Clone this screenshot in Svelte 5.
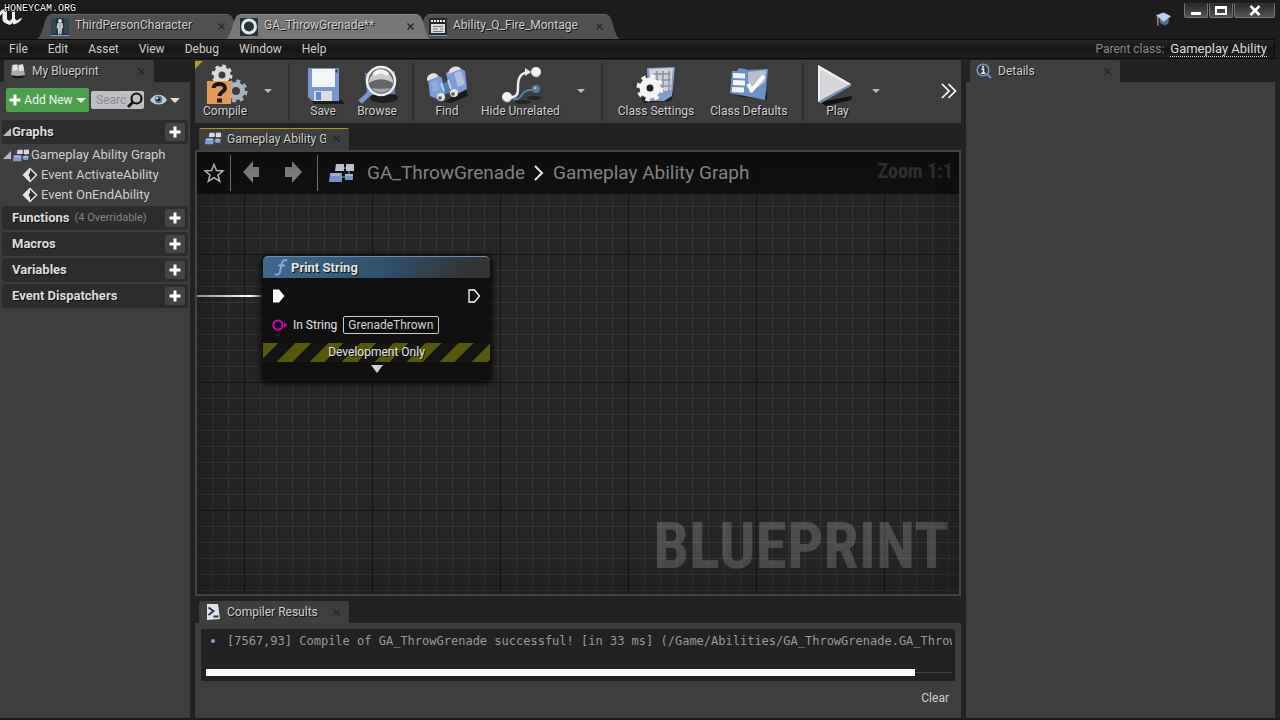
<script>
  const documents = [
    { title: 'ThirdPersonCharacter', icon: 'figure' },
    { title: 'GA_ThrowGrenade**', icon: 'ring', active: true },
    { title: 'Ability_Q_Fire_Montage', icon: 'clip' }
  ];
  const menus = ['File', 'Edit', 'Asset', 'View', 'Debug', 'Window', 'Help'];
  const toolbar = [
    [{ label: 'Compile', menu: true }],
    [{ label: 'Save' }, { label: 'Browse' }],
    [{ label: 'Find' }, { label: 'Hide Unrelated', menu: true }],
    [{ label: 'Class Settings' }, { label: 'Class Defaults' }],
    [{ label: 'Play', menu: true }]
  ];
  const sections = [
    { name: 'Functions', note: '(4 Overridable)' },
    { name: 'Macros' },
    { name: 'Variables' },
    { name: 'Event Dispatchers' }
  ];
  const events = ['Event ActivateAbility', 'Event OnEndAbility'];
  let search = $state('');
  let inString = $state('GrenadeThrown');
</script>

{#snippet close(name)}
  <button class="close" aria-label="Close {name}">
    <svg width="7" height="7" viewBox="0 0 7 7"><path d="M.5.5l6 6M6.5.5l-6 6" stroke="currentColor" stroke-width="1.3" /></svg>
  </button>
{/snippet}

{#snippet caret(size = 10)}
  <svg width={size} height={size / 2} viewBox="0 0 10 5"><path d="M0 0h10L5 5z" fill="currentColor" /></svg>
{/snippet}

{#snippet plus()}
  <svg width="12" height="12" viewBox="0 0 12 12"><path d="M4.500 .5h3v4h4v3h-4v4h-3v-4h-4v-3h4z" fill="#fff" /></svg>
{/snippet}

{#snippet graphIcon(size)}
  <svg width={size} height={size * 0.8} viewBox="0 0 25 20">
    <path d="M11 5h6M11 14h8M20 6v8" stroke="#7b7f86" stroke-width="1.500" />
    <path d="M7 1h8v7H6z" fill="#d5d8e0" /><path d="M17 1h8v7h-8z" fill="#d5d8e0" />
    <path d="M1 10h12v9H0z" fill="#7e9cd4" /><path d="M2 10h10l-1 3H2z" fill="#a8bce4" />
    <path d="M16 11h8v6h-8z" fill="#809fd8" /><path d="M16 11h8v2h-8z" fill="#b2c2e3" />
  </svg>
{/snippet}

{#snippet docIcon(kind)}
  <svg width="18" height="18" viewBox="0 0 18 18">
    <rect width="18" height="18" fill={kind === 'clip' ? '#292929' : '#26323b'} />
    {#if kind === 'figure'}
      <path d="M0 0h5v16H0zM13 0h5v16h-5z" fill="#304654" />
      <circle cx="9" cy="3" r="1.900" fill="#e0e0dc" />
      <path d="M6.500 5h5l.7 5-1.200.2-.6 6.300H9.200L9 11l-.5 5.500H7.200l-.5-6.300-1.200-.2z" fill="#c8ccc8" />
      <path d="M9 5v5" stroke="#8e9290" />
    {:else if kind === 'ring'}
      <circle cx="9" cy="8.500" r="6.500" fill="#22333f" stroke="#e6e6e6" stroke-width="3" />
    {:else}
      <path d="M2 6h14v9H2z" fill="#ddd" />
      <path d="M2 3h14" stroke="#eee" stroke-width="2" stroke-dasharray="2 1" />
      <path d="M4 8.500h10M4 11h5M11 11h3M4 13.500h10" stroke="#777" />
    {/if}
    {#if kind !== 'ring'}<path d="M0 17.500h18" stroke="#7398dc" />{/if}
  </svg>
{/snippet}

{#snippet toolIcon(label)}
  <svg width="42" height="42" viewBox="0 0 42 42">
    {#if label === 'Compile'}
      <g fill="none" stroke="#d9dadd">
        <circle cx="18" cy="11" r="6" stroke-width="5" />
        <circle cx="18" cy="11" r="9" stroke-width="3" stroke-dasharray="3.500 3.570" />
      </g>
      <g fill="none" stroke="#a9b1c1">
        <circle cx="32" cy="27" r="6.500" stroke-width="5" />
        <circle cx="32" cy="27" r="10" stroke-width="3" stroke-dasharray="4 3.850" />
      </g>
      <path d="M3 17h24v23H3z" fill="#e29a55" />
      <path d="M9.500 24c0-5.500 11.500-5.500 11.500 0 0 4-5.500 4-5.500 8" fill="none" stroke="#171717" stroke-width="4" />
      <rect x="13" y="34.500" width="5" height="4" fill="#171717" />
    {:else if label === 'Save'}
      <path d="M9 36h31l3 4H12z" fill="#1c1c1c" />
      <path d="M6 4h31v33H10l-4-4z" fill="#7896cc" />
      <path d="M10 5h23v18H10z" fill="#f5f5f5" />
      <path d="M12 27h18v10H12z" fill="#d9dce2" /><path d="M14 28h5v8h-5z" fill="#6184c2" />
      <path d="M33.500 5.500h2v3h-2z" fill="#243b63" />
    {:else if label === 'Browse'}
      <ellipse cx="28" cy="34" rx="14" ry="5" fill="#1d1d1d" />
      <path d="M9 9l30-2v23L11 31z" fill="#6584ba" />
      <path d="M16 27L4 38" stroke="#7897cf" stroke-width="5" />
      <circle cx="25" cy="17" r="14" fill="#626468" stroke="#eceef0" stroke-width="2.500" />
      <path d="M13 19a12 12 0 0124 0c-8-5-16-5-24 0z" fill="#c9cbcf" />
      <path d="M18 11c3-5 10-5 14 0" stroke="#f4f4f4" stroke-width="4" fill="none" />
      <path d="M15 24c6 6 14 6 20 0-5 1-15 1-20 0z" fill="#a5a7aa" />
    {:else if label === 'Find'}
      <path d="M18 38l22-13 2 7-17 7z" fill="#1c1c1c" />
      <path d="M15 20l12-5 2 12-12 4z" fill="#5580b4" />
      <path d="M2 15c4-5 9-5 14-1l3 15-8 6-7-3z" fill="#7b9cd6" />
      <path d="M20 9L32 3l7 4 2 18-8 4-10-6z" fill="#7b9cd6" />
      <path d="M1 15c0-5 7-8 11-4l-1 2-10 4zM23 7c1-4 9-7 12-2l-13 5z" fill="#dfe1e6" />
      <path d="M28 9l7-2 4 13-7 3z" fill="#b4bfd9" /><path d="M5 18l6-2 2 11-6 1z" fill="#8eabdd" />
      <path d="M15 19l3 8M22 16l3 9" stroke="#d4dae6" stroke-width="1.500" />
      <circle cx="15" cy="33" r="4" fill="#e4e4e4" /><circle cx="28" cy="29" r="4" fill="#e4e4e4" />
      <circle cx="14" cy="34" r="1.800" fill="#555" /><circle cx="27" cy="30" r="1.800" fill="#555" />
    {:else if label === 'Hide Unrelated'}
      <ellipse cx="35" cy="34" rx="7" ry="2" fill="#252525" />
      <ellipse cx="24" cy="38" rx="8" ry="2" fill="#252525" />
      <path d="M11 34c15 5 8-9 22-8" fill="none" stroke="#5585a8" stroke-width="2" />
      <circle cx="37" cy="25" r="4" fill="#4e7ea5" /><circle cx="36" cy="24" r="1.500" fill="#9ab8cc" />
      <path d="M8 33h6c5-1 5-5 5-11 0-9 3-14 12-14" fill="none" stroke="#eceef2" stroke-width="2.500" />
      <path d="M26 4l6 4-6 4z" fill="#e4e7ee" />
      <circle cx="8" cy="33" r="5" fill="#f2f2f2" /><circle cx="37" cy="8" r="5" fill="#f2f2f2" />
      <path d="M4 35c2 4 7 4 8 0M33 10c2 4 7 4 8 0" fill="none" stroke="#9fa8b8" />
    {:else if label === 'Class Settings'}
      <path d="M6 34l33-5-3 8-27 2z" fill="#1c1c1c" />
      <path d="M12 4l28-1-3 29-8 5H13z" fill="#829cc7" />
      <path d="M14 5l24-1-2 22-19 3z" fill="#d0d3d9" />
      <path d="M19 10h17M19 16h17M19 22h17M22 7v22M28 7v22M34 7v22" stroke="#8792a5" stroke-width="1.500" />
      <circle cx="15" cy="24" r="7" fill="#222" stroke="#f3f3f3" stroke-width="7" />
      <circle cx="15" cy="24" r="11.500" fill="none" stroke="#f3f3f3" stroke-width="4" stroke-dasharray="4.500 4.530" />
    {:else if label === 'Class Defaults'}
      <path d="M8 32l31-4v8z" fill="#1d1d1d" />
      <path d="M4 7h5l2-3 6 1 2 1 21-1-3 31L2 29z" fill="#6c91ca" />
      <path d="M20 8l18-2-1 12-16 11z" fill="#babfca" />
      <path d="M5 9l12 .5v5L5 14zM5 16l12 .5v5L5 21zM4 23l12 .5v5L4 28z" fill="#f5f5f5" />
      <path d="M20 20l4 6 12-14" fill="none" stroke="#fff" stroke-width="4" />
    {:else}
      <path d="M4 38l32-6-1 4-25 6z" fill="#111" />
      <path d="M2 1l33 19L2 38z" fill="#d4d6da" /><path d="M2 1l33 19-2 1L4 5v32l-2 1z" fill="#eff0f2" />
      <path d="M2 38l33-18v2L5 39z" fill="#7192b6" />
    {/if}
  </svg>
{/snippet}

<div class="editor">
  <header class="titlebar">
    <svg class="logo" width="22" height="17" viewBox="0 0 22 17">
      <path d="M0 4C2 1 5 0 9 0L7 2v9l2 2 3-2V4L10 2.500 17 0l-2 2v9l2 1.500 5-3c-1 4-5 6-8 7L12.500 15 10 17C6 16 3 14 2.500 12V5L0 8z" fill="#eee" />
    </svg>
    <span class="stamp">HONEYCAM.ORG</span>
    <nav class="docs" aria-label="Open documents">
      {#each documents as doc}
        <div class="doc" class:active={doc.active}>
          <svg class="cap" width="14" height="25" viewBox="0 0 14 25"><path d="M0 25C6 22 7 3 12 1l2-1v25z" fill="currentColor" /></svg>
          <div class="doc-body">
            {@render docIcon(doc.icon)}
            <a href="#{doc.icon}">{doc.title}</a>
            {@render close(doc.title)}
          </div>
          <svg class="cap" width="14" height="25" viewBox="0 0 14 25"><path d="M14 25C8 22 7 3 2 1L0 0v25z" fill="currentColor" /></svg>
        </div>
      {/each}
    </nav>
    <button class="tutorial" aria-label="Tutorials">
      <svg width="16" height="15" viewBox="0 0 17 15"><path d="M4 6l10 1-1 5-4 2-5-3z" fill="#48708f" /><path d="M0 3l8-3 8 4-8 6z" fill="#bdcdf0" /><path d="M1 4l1 2v8" stroke="#c28a59" stroke-width="1.500" fill="none" /></svg>
    </button>
    <div class="window-buttons">
      <button aria-label="Minimize"><svg width="12" height="11" viewBox="0 0 12 11"><path d="M1 7h10v3H1z" fill="#fff" /></svg></button>
      <button aria-label="Maximize"><svg width="12" height="11" viewBox="0 0 12 11"><path d="M0 1h12v9H0zM2 4v4h8V4z" fill="#fff" fill-rule="evenodd" /></svg></button>
      <button class="wide" aria-label="Close window"><svg width="12" height="11" viewBox="0 0 12 11"><path d="M1.500 1l9 9M10.500 1l-9 9" stroke="#fff" stroke-width="2.500" /></svg></button>
    </div>
  </header>

  <div class="menubar">
    {#each menus as menu}<button>{menu}</button>{/each}
    <p>Parent class: <a href="#parent">Gameplay Ability</a></p>
  </div>

  <main>
    <aside class="left">
      <div class="tab">
        <svg width="16" height="14" viewBox="0 0 16 14"><path d="M1 12h14l-3 2H4z" fill="#171717" /><path d="M2 1l5-1 1 1 5-1 2 11-7 1-7-1z" fill="#a9acb2" /><path d="M3 1l4 0 .5 5-5 1zM9 1l4-.5 1 6-5 .5z" fill="#e5e6e8" /></svg>
        <h2>My Blueprint</h2>
        {@render close('My Blueprint')}
      </div>
      <div class="panel">
        <div class="tools">
          <button class="add">{@render plus()}Add New {@render caret()}</button>
          <label class="search">
            <input type="text" placeholder="Search" aria-label="Search blueprint" bind:value={search} />
            <svg width="16" height="16" viewBox="0 0 16 16"><circle cx="9.500" cy="6.500" r="5" fill="none" stroke="#151515" stroke-width="2.200" /><path d="M6 10l-5 5" stroke="#151515" stroke-width="3" /></svg>
          </label>
          <button class="view" aria-label="View options">
            <svg width="17" height="12" viewBox="0 0 17 12"><path d="M0 6C4-1 13-1 17 6c-4 6-13 6-17 0z" fill="#c7cdd1" /><circle cx="8.500" cy="5.500" r="3.700" fill="#48718f" /><circle cx="8.500" cy="5.500" r="1.600" fill="#121a20" /><circle cx="7.200" cy="4.200" r="1" fill="#fff" /></svg>
            {@render caret()}
          </button>
        </div>
        <div class="section open">
          <svg class="fold" width="8" height="8" viewBox="0 0 8 8"><path d="M8 0v8H0z" fill="#b5b8c2" /></svg>
          <h3>Graphs</h3>
          <button class="plus" aria-label="Add graph">{@render plus()}</button>
        </div>
        <ul class="tree">
          <li class="root"><svg class="fold" width="8" height="8" viewBox="0 0 8 8"><path d="M8 0v8H0z" fill="#b5b8c2" /></svg>{@render graphIcon(16)}<span>Gameplay Ability Graph</span></li>
          {#each events as event}
            <li><svg width="16" height="16" viewBox="0 0 16 16"><path d="M8 1.500L14.500 8 8 14.500 1.500 8z" fill="#303030" stroke="#e4e4e4" stroke-width="1.500" /><path d="M8 1.500v4L6.500 8 8 10.500v4L1.500 8z" fill="#e4e4e4" /></svg><span>{event}</span></li>
          {/each}
        </ul>
        {#each sections as section}
          <div class="section">
            <h3>{section.name}</h3>
            {#if section.note}<small>{section.note}</small>{/if}
            <button class="plus" aria-label="Add to {section.name}">{@render plus()}</button>
          </div>
        {/each}
      </div>
    </aside>

    <section class="center">
      <div class="toolbar">
        {#each toolbar as group, i}
          {#if i}<span class="divider"></span>{/if}
          {#each group as item}
            <button class="tool">{@render toolIcon(item.label)}<span>{item.label}</span></button>
            {#if item.menu}<button class="drop" aria-label="{item.label} options">{@render caret(8)}</button>{/if}
          {/each}
        {/each}
        <button class="more" aria-label="More tools"><svg width="16" height="16" viewBox="0 0 16 16"><path d="M1 1l7 7-7 7M7.500 1l7 7-7 7" fill="none" stroke="#fff" stroke-width="1.700" /></svg></button>
      </div>

      <div class="tab graph-tab">
        {@render graphIcon(16)}
        <h2>Gameplay Ability Graph</h2>
        {@render close('graph')}
      </div>
      <div class="graph">
        <div class="crumbs">
          <button class="star" aria-label="Bookmark"><svg width="20" height="20" viewBox="0 0 20 20"><path d="M10 1.500l2.500 6 6.500.3-5 4.200 1.700 6.300L10 14.700l-5.700 3.600L6 12 1 7.800l6.500-.3z" fill="none" stroke="#d2d5dc" stroke-width="1.500" /></svg></button>
          <button class="nav" aria-label="Back"><svg width="18" height="24" viewBox="0 0 18 24"><path d="M0 11L10 0v6h6v10h-6v6z" fill="#858585" /></svg></button>
          <button class="nav" aria-label="Forward"><svg width="18" height="24" viewBox="0 0 18 24"><path d="M18 11L8 0v6H1v10h7v6z" fill="#858585" /></svg></button>
          <div class="path">
            {@render graphIcon(25)}
            <a href="#asset">GA_ThrowGrenade</a>
            <svg width="10" height="16" viewBox="0 0 10 16"><path d="M1 1l7 7-7 7" fill="none" stroke="#fff" stroke-width="2" /></svg>
            <a href="#graph">Gameplay Ability Graph</a>
          </div>
          <span class="zoom">Zoom 1:1</span>
        </div>
        <span class="mark">BLUEPRINT</span>
        <div class="wire"></div>
        <article class="node">
          <h4>
            <svg width="14" height="17" viewBox="0 0 14 17"><path d="M13 1.500C9 0 8 3 7.500 6L6 13c-.5 3-3 3-5 2M4 6.500h7" fill="none" stroke="#86a8e6" stroke-width="1.900" /></svg>
            Print String
          </h4>
          <div class="pins">
            <svg width="14" height="14" viewBox="0 0 14 14"><path d="M1 .5h6l5.500 6.500L7 13.500H1z" fill="#fff" /></svg>
            <svg width="14" height="14" viewBox="0 0 14 14"><path d="M2 1h5.500L12.500 7l-5 6H2z" fill="#111" stroke="#fff" stroke-width="1.300" /></svg>
          </div>
          <div class="value">
            <svg width="15" height="12" viewBox="0 0 15 12"><circle cx="6" cy="6" r="4.600" fill="#180916" stroke="#dc0ab4" stroke-width="1.900" /><path d="M12 3l3 3-3 3z" fill="#dc0ab4" /></svg>
            <label for="in-string">In String</label>
            <input id="in-string" type="text" bind:value={inString} />
          </div>
          <div class="dev">Development Only</div>
          <button class="expand" aria-label="Show advanced pins"><svg width="12" height="8" viewBox="0 0 12 8"><path d="M0 0h12L6 8z" fill="#d0d0d4" /></svg></button>
        </article>
      </div>

      <div class="tab results-tab">
        <svg width="16" height="16" viewBox="0 0 16 16"><path d="M2 0h11l2 15-13 1z" fill="#dfe2e8" /><path d="M3.500 3.500L8.500 7l-5 4M8.500 12.500h5" fill="none" stroke="#253549" stroke-width="1.900" /></svg>
        <h2>Compiler Results</h2>
        {@render close('Compiler Results')}
      </div>
      <div class="results">
        <div class="log">
          <p><i></i>[7567,93] Compile of GA_ThrowGrenade successful! [in 33 ms] (/Game/Abilities/GA_ThrowGrenade.GA_ThrowGrenade)</p>
          <div class="track"><div class="thumb"></div></div>
        </div>
        <button class="clear">Clear</button>
      </div>
    </section>

    <aside class="right">
      <div class="tab">
        <svg width="16" height="16" viewBox="0 0 16 16"><path d="M10 10l5 5" stroke="#7193ca" stroke-width="2.200" /><circle cx="7" cy="7" r="5.800" fill="#35383d" stroke="#7798ca" stroke-width="1.500" /><path d="M5.500 6h2v4M5.300 10.200h4" stroke="#fff" stroke-width="1.500" fill="none" /><circle cx="7" cy="3.700" r="1" fill="#fff" /></svg>
        <h2>Details</h2>
        {@render close('Details')}
      </div>
      <div class="panel"></div>
    </aside>
  </main>
</div>

<style>
  :global(body) { margin: 0; background: #1c1c1c; }
  .editor {
    display: flex; flex-direction: column; min-height: 100vh; box-sizing: border-box;
    padding-bottom: 2px; color: #cfcfcf; background: #1c1c1c;
    font: 12px/16px Roboto, sans-serif;
  }
  .editor :global(*) { box-sizing: border-box; }
  svg { display: block; flex: none; overflow: visible; }
  button { display: flex; align-items: center; justify-content: center; padding: 0; border: 0; background: none; color: inherit; font: inherit; }
  a { color: inherit; text-decoration: none; }
  h2, h3, h4, p, ul { margin: 0; padding: 0; font: inherit; list-style: none; }
  h2, .doc a, .tool, .section h3 { text-shadow: 1px 1px 0 #101010; }

  .titlebar { position: relative; display: flex; align-items: flex-end; height: 39px; padding-left: 37px; }
  .logo { position: absolute; left: 0; top: 8px; }
  .stamp {
    position: absolute; left: 4px; top: 4px; color: #fff; font: 10px/10px "Liberation Mono", monospace;
    text-shadow: 1px 0 #000, -1px 0 #000, 0 1px #000, 0 -1px #000; z-index: 3;
  }
  .docs { display: flex; flex: 1; min-width: 0; }
  .doc { position: relative; display: flex; width: 205px; height: 25px; margin-right: -16px; color: #505050; }
  .doc.active { z-index: 1; color: #767876; }
  .doc-body { display: flex; flex: 1; align-items: center; gap: 6px; min-width: 0; background: currentColor; box-shadow: inset 0 1px rgba(255, 255, 255, .12); }
  .doc a { flex: 1; margin-top: -3px; color: #cfcfcf; white-space: nowrap; }
  .close { width: 9px; height: 9px; color: #262626; }
  .doc .close { margin-right: 2px; }
  .tutorial { align-self: center; margin-right: 12px; }
  .window-buttons { display: flex; align-self: flex-start; gap: 1px; margin: 3px 5px 0 0; }
  .window-buttons button { width: 24px; height: 15px; border: 1px solid #777; border-top-color: #333; border-radius: 0 0 2px 2px; background: linear-gradient(#2a2a2a, #555); }
  .window-buttons .wide { width: 41px; }

  .menubar {
    display: flex; align-items: center; gap: 20px; height: 20px; margin-right: 5px; padding: 0 7px 0 9px;
    border: 1px solid #0a0a0a; border-left: 0; background: linear-gradient(#252525, #151515 50%, #202020);
  }
  .menubar p { margin-left: auto; color: #888; }
  .menubar a { margin-left: 3px; border-bottom: 1px dotted #ddd; color: #ddd; font-size: 13px; line-height: 12px; }

  main { display: flex; flex: 1; gap: 5px; min-height: 0; padding: 1px 5px 0 0; background: #222; }
  aside, .center { display: flex; flex-direction: column; min-width: 0; }
  .left { width: 190px; }
  .center { flex: 1; }
  .right { width: 309px; }
  .panel { flex: 1; background: #3e3e3e; }
  .tab { display: flex; align-items: center; gap: 6px; width: 150px; height: 22px; margin-left: 4px; padding: 0 8px 0 6px; border-radius: 2px 2px 0 0; background: #3e3e3e; }
  .tab h2 { flex: 1; overflow: hidden; white-space: nowrap; }

  .tools { display: flex; align-items: center; gap: 2px; height: 38px; padding: 2px 0 4px 6px; }
  .add { gap: 3px; width: 83px; height: 24px; border-radius: 2px; background: #4b9f4d; color: #f2f2f2; white-space: nowrap; }
  .search { display: flex; align-items: center; width: 53px; height: 18px; padding-right: 1px; border-radius: 2px; background: #bfc0c4; }
  .search input { flex: 1; width: 0; min-width: 0; padding: 0 0 0 5px; border: 0; outline: 0; background: none; color: #333; font: inherit; }
  .search input::placeholder { color: #8a8a8c; }
  .view { gap: 3px; margin-left: 4px; color: #ddd; }
  .section { position: relative; display: flex; align-items: center; gap: 5px; height: 24px; margin: 2px 2px 0; padding: 0 3px 0 10px; border-radius: 3px; background: #2d2d2d; }
  .section.open { margin-top: 0; }
  .section h3 { color: #dedede; font-size: 13px; font-weight: bold; }
  .section small { color: #848484; font-size: 11px; }
  .section .fold { position: absolute; left: 1px; }
  .plus { width: 20px; height: 18px; margin-left: auto; border-radius: 2px; background: #444; }
  .tree { padding: 0 0 0 22px; font-size: 13px; }
  .tree li { display: flex; align-items: center; gap: 3px; height: 20px; padding-top: 2px; white-space: nowrap; }
  .tree .root { margin-left: -19px; gap: 2px; }

  .toolbar { position: relative; display: flex; height: 63px; padding: 1px 0 2px; background: #3e3e3e; }
  .toolbar::before { content: ''; position: absolute; left: 0; top: 1px; border: 4px solid; border-color: #b6a018 transparent transparent #b6a018; }
  .tool { flex-direction: column; min-width: 52px; padding: 0 8px; white-space: nowrap; }
  .tool svg { margin: 0 -8px; }
  .tool span { margin-top: -3px; }
  .drop { width: 26px; color: #b8bbc6; }
  .divider { width: 2px; margin: 2px 7px 0; background: #303030; }
  .more { margin: 0 4px 0 auto; }

  .graph-tab { margin-top: 5px; padding-bottom: 1px; background: linear-gradient(#b09816 1px, #3e3e3e 1px); }
  .graph {
    position: relative; flex: 1; overflow: hidden; border: 2px solid #434343; background-color: #262626;
    background-image:
      linear-gradient(90deg, #151515 1px, transparent 1px), linear-gradient(#151515 1px, transparent 1px),
      linear-gradient(90deg, #353535 1px, transparent 1px), linear-gradient(#353535 1px, transparent 1px);
    background-size: 128px 128px, 128px 128px, 16px 16px, 16px 16px;
    background-position: 47px 102px;
  }
  .graph::after { content: ''; position: absolute; inset: 0; box-shadow: inset 0 0 60px rgba(0, 0, 0, .35); pointer-events: none; }
  .crumbs { display: flex; align-items: center; height: 42px; background: rgba(10, 10, 10, .78); }
  .star { width: 34px; height: 36px; border-right: 1px solid #777; }
  .nav { width: 42px; height: 36px; }
  .nav + .nav { width: 45px; border-right: 1px solid #777; padding-right: 4px; }
  .path { display: flex; align-items: center; gap: 9px; margin-left: 11px; color: #8e8e8e; font-size: 19px; line-height: 24px; white-space: nowrap; }
  .path a:first-of-type { margin-left: 4px; }
  .zoom { margin: 0 6px 4px auto; color: #343434; font: bold 20px/24px "Roboto Condensed", Roboto, sans-serif; white-space: nowrap; }
  .mark { position: absolute; right: 10px; bottom: 9px; color: rgba(255, 255, 255, .18); font: bold 64px/76px "Roboto Condensed", Roboto, sans-serif; }
  .wire { position: absolute; left: 0; top: 143px; width: 76px; height: 2px; background: linear-gradient(90deg, #aaa, #fff 70%, #888 85%, #444); }
  .node {
    position: absolute; left: 65px; top: 104px; width: 229px; padding: 0 1px 5px; border-radius: 6px;
    background: rgba(14, 14, 14, .93); box-shadow: 0 1px 5px 2px rgba(0, 0, 0, .7); color: #e6e6e6;
  }
  .node h4 { display: flex; align-items: center; gap: 3px; height: 22px; padding-left: 11px; border-top: 1px solid #688fb8; border-radius: 5px 5px 0 0; background: linear-gradient(100deg, #42698e, #304f6a 55%, #333 90%); font-size: 13px; font-weight: bold; text-shadow: 1px 1px 0 #111; }
  .pins { display: flex; justify-content: space-between; padding: 11px 9px 0; }
  .value { display: flex; align-items: center; gap: 6px; height: 20px; margin-top: 12px; padding-left: 9px; }
  .value input { width: 96px; height: 18px; padding: 0 4px; border: 1px solid #ccc; border-radius: 2px; outline: 0; background: none; color: #d2d2d2; font: inherit; }
  .dev { height: 19px; margin-top: 8px; line-height: 18px; text-align: center; text-shadow: 1px 1px 0 #111; background: repeating-linear-gradient(135deg, #55580b 0 11px, #141414 11px 23px); }
  .expand { width: 100%; height: 14px; }

  .results-tab { margin-top: 5px; }
  .results { display: flex; flex-direction: column; height: 95px; padding: 6px; background: #3e3e3e; }
  .log { height: 52px; padding: 4px 3px 0 5px; overflow: hidden; border-radius: 2px; background: #222; }
  .log p { display: flex; align-items: center; overflow: hidden; color: #9a9a9a; font: 12px/16px "DejaVu Sans Mono", monospace; white-space: nowrap; }
  .log i { flex: none; width: 4px; height: 4px; margin: 0 12px 0 5px; border-radius: 50%; background: #7ba2e0; }
  .track { margin-top: 20px; height: 7px; background: linear-gradient(transparent 3px, #444 3px 4px, transparent 4px); }
  .thumb { width: 95%; height: 7px; background: #fff; }
  .clear { align-self: flex-end; margin: 9px 6px 0 0; }
</style>
